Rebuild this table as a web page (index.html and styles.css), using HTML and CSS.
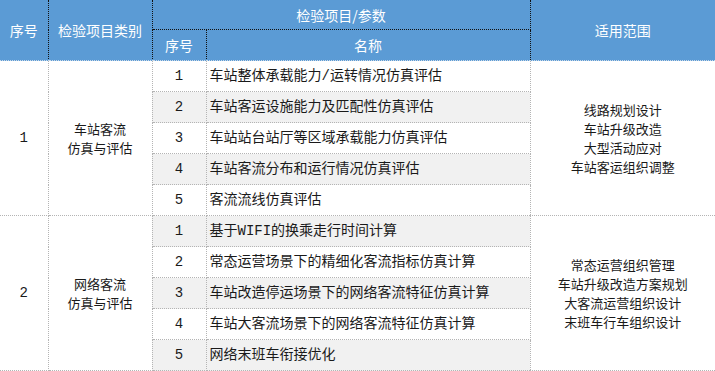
FILE: index.html
```html
<!DOCTYPE html>
<html lang="zh">
<head>
<meta charset="utf-8">
<title>检验项目</title>
<link rel="stylesheet" href="styles.css">
</head>
<body>
<table class="grid">
  <colgroup>
    <col class="c-no">
    <col class="c-cat">
    <col class="c-sub">
    <col class="c-name">
    <col class="c-scope">
  </colgroup>
  <thead>
    <tr class="h1">
      <th rowspan="2">序号</th>
      <th rowspan="2">检验项目类别</th>
      <th colspan="2">检验项目/参数</th>
      <th rowspan="2" class="last">适用范围</th>
    </tr>
    <tr class="h2">
      <th>序号</th>
      <th>名称</th>
    </tr>
  </thead>
  <tbody>
    <tr>
      <td rowspan="5" class="num plain">1</td>
      <td rowspan="5" class="cat plain">车站客流<br>仿真与评估</td>
      <td class="num">1</td>
      <td class="name">车站整体承载能力/运转情况仿真评估</td>
      <td rowspan="5" class="scope plain last">线路规划设计<br>车站升级改造<br>大型活动应对<br>车站客运组织调整</td>
    </tr>
    <tr class="alt"><td class="num">2</td><td class="name">车站客运设施能力及匹配性仿真评估</td></tr>
    <tr><td class="num">3</td><td class="name">车站站台站厅等区域承载能力仿真评估</td></tr>
    <tr class="alt"><td class="num">4</td><td class="name">车站客流分布和运行情况仿真评估</td></tr>
    <tr><td class="num">5</td><td class="name">客流流线仿真评估</td></tr>
    <tr class="alt">
      <td rowspan="5" class="num plain">2</td>
      <td rowspan="5" class="cat plain">网络客流<br>仿真与评估</td>
      <td class="num">1</td>
      <td class="name">基于WIFI的换乘走行时间计算</td>
      <td rowspan="5" class="scope plain last">常态运营组织管理<br>车站升级改造方案规划<br>大客流运营组织设计<br>末班车行车组织设计</td>
    </tr>
    <tr><td class="num">2</td><td class="name">常态运营场景下的精细化客流指标仿真计算</td></tr>
    <tr class="alt"><td class="num">3</td><td class="name">车站改造停运场景下的网络客流特征仿真计算</td></tr>
    <tr><td class="num">4</td><td class="name">车站大客流场景下的网络客流特征仿真计算</td></tr>
    <tr class="alt"><td class="num">5</td><td class="name">网络末班车衔接优化</td></tr>
  </tbody>
</table>
</body>
</html>
```

FILE: styles.css
```css
html, body {
  margin: 0;
  padding: 0;
  background: #ffffff;
}

body {
  font-family: "Noto Sans CJK SC", "Noto Sans", sans-serif;
  font-size: 14px;
  color: #1a1a1a;
}

.grid {
  width: 715px;
  border-collapse: collapse;
  table-layout: fixed;
}

.c-no { width: 48px; }
.c-cat { width: 104px; }
.c-sub { width: 54px; }
.c-name { width: 324px; }
.c-scope { width: 185px; }

.grid th {
  background: #5b9bd5;
  color: #ffffff;
  font-weight: normal;
  font-size: 14px;
  line-height: 18px;
  text-align: center;
  vertical-align: middle;
  padding: 0;
  border-right: 1px dotted #111111;
  border-bottom: 1px dotted #111111;
}

.grid .h1 th { height: 29px; }
.grid .h2 th { height: 30px; border-bottom: 1px dotted #c8d8e8; }
.grid .h1 th[rowspan] { border-bottom: 1px dotted #c8d8e8; }

.grid th.last, .grid td.last { border-right: none; }

.grid td {
  padding: 0;
  height: 30px;
  line-height: 18px;
  vertical-align: middle;
  background: #ffffff;
  border-right: 1px dotted #b4b4b4;
  border-bottom: 1px dotted #b4b4b4;
}

.grid tr.alt td { background: #f1f1f1; }
.grid tr.alt td.plain { background: #ffffff; }

.num {
  text-align: center;
  font-family: "Liberation Mono", "Noto Sans CJK SC", monospace;
}

.cat, .scope {
  text-align: center;
  font-size: 13px;
}

.grid td.cat, .grid td.scope {
  line-height: 19px;
}

.name {
  padding-left: 3px !important;
  white-space: nowrap;
  font-family: "Liberation Mono", "Noto Sans CJK SC", monospace;
}
```
